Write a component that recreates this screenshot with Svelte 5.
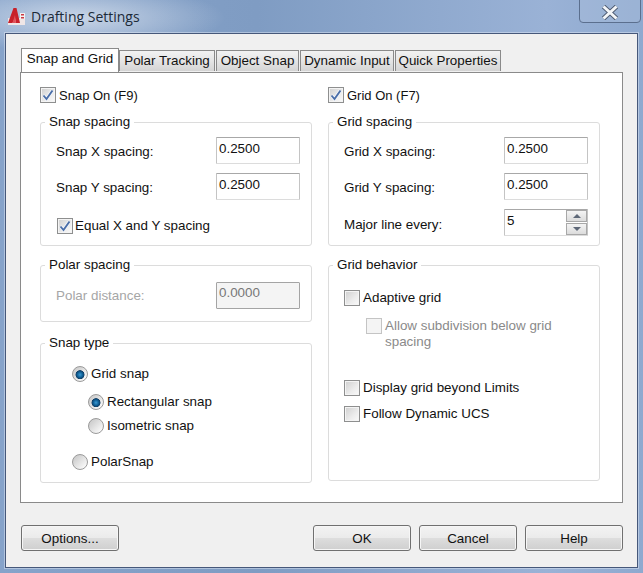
<script>
	const tabs = ['Snap and Grid', 'Polar Tracking', 'Object Snap', 'Dynamic Input', 'Quick Properties'];
</script>

{#snippet check(on, off = false)}
	<span class="box" class:off>
		{#if on}
			<svg width="14" height="14" viewBox="0 0 14 14">
				<path d="M2.5 7.5 L5.5 11 L11.5 2.5" fill="none" stroke="#f4f6fa" stroke-width="3.4" />
				<path d="M2.5 7.5 L5.5 11 L11.5 2.5" fill="none" stroke="#4a6ea8" stroke-width="1.9" />
			</svg>
		{/if}
	</span>
{/snippet}

{#snippet radio(on)}
	<span class="radio" class:on></span>
{/snippet}

<div class="window">
	<header class="titlebar">
		<svg class="app-icon" width="19" height="19" viewBox="0 0 19 19">
			<rect x="1" y="11" width="17" height="7" fill="#efe6e6" />
			<path d="M1 16 L6.5 1 L9.5 1 L13 16 L9 16 L8 11 L5.5 16 Z" fill="#c8202a" />
			<path d="M5.5 16 L8 8 L9 16 Z" fill="#e0525a" />
			<rect x="13" y="6" width="5" height="6" fill="#f2f2f2" />
			<rect x="14" y="7" width="3" height="1.5" fill="#cc3a44" />
			<rect x="14" y="10" width="3" height="1.5" fill="#cc3a44" />
		</svg>
		<span class="title">Drafting Settings</span>
		<button class="close" aria-label="Close">
			<svg width="18" height="15" viewBox="0 0 18 15"><path d="M2.5 1.5 L15.5 13.5 M15.5 1.5 L2.5 13.5" stroke="#4d5a70" stroke-width="4.8" /><path d="M2.5 1.5 L15.5 13.5 M15.5 1.5 L2.5 13.5" stroke="#f4f6f8" stroke-width="3" /></svg>
		</button>
	</header>

	<div class="client">
		<div class="tabs">
			{#each tabs as tab, i}
				<div class="tab" class:active={i === 0}>{tab}</div>
			{/each}
		</div>

		<div class="panel">
			<div class="col">
				<label class="row-check top">{@render check(true)}Snap On (F9)</label>
				<fieldset class="spacing">
					<legend>Snap spacing</legend>
					<div class="field"><span>Snap X spacing:</span><div class="input">0.2500</div></div>
					<div class="field"><span>Snap Y spacing:</span><div class="input">0.2500</div></div>
					<div class="field"><label class="row-check equal">{@render check(true)}Equal X and Y spacing</label></div>
				</fieldset>
				<fieldset class="polar">
					<legend>Polar spacing</legend>
					<div class="field"><span class="faint">Polar distance:</span><div class="input disabled">0.0000</div></div>
				</fieldset>
				<fieldset class="snap-type">
					<legend>Snap type</legend>
					<label class="row-radio">{@render radio(true)}Grid snap</label>
					<div class="nested">
						<label class="row-radio">{@render radio(true)}Rectangular snap</label>
						<label class="row-radio">{@render radio(false)}Isometric snap</label>
					</div>
					<label class="row-radio">{@render radio(false)}PolarSnap</label>
				</fieldset>
			</div>

			<div class="col">
				<label class="row-check top">{@render check(true)}Grid On (F7)</label>
				<fieldset class="spacing">
					<legend>Grid spacing</legend>
					<div class="field"><span>Grid X spacing:</span><div class="input">0.2500</div></div>
					<div class="field"><span>Grid Y spacing:</span><div class="input">0.2500</div></div>
					<div class="field major">
						<span>Major line every:</span>
						<div class="input spin">
							5
							<div class="spinner">
								<div class="spin-btn"><i class="up"></i></div>
								<div class="spin-btn"><i class="down"></i></div>
							</div>
						</div>
					</div>
				</fieldset>
				<fieldset class="behavior">
					<legend>Grid behavior</legend>
					<label class="row-check">{@render check(false)}Adaptive grid</label>
					<label class="row-check sub dim">{@render check(false, true)}<span>Allow subdivision below grid<br />spacing</span></label>
					<label class="row-check display">{@render check(false)}Display grid beyond Limits</label>
					<label class="row-check follow">{@render check(false)}Follow Dynamic UCS</label>
				</fieldset>
			</div>
		</div>

		<footer class="actions">
			<button>Options...</button>
			<div class="right">
				<button>OK</button>
				<button>Cancel</button>
				<button>Help</button>
			</div>
		</footer>
	</div>
</div>

<style>
	:global(body) {
		margin: 0;
	}

	.window {
		width: 643px;
		height: 573px;
		box-sizing: border-box;
		padding: 0 5px 5px;
		display: flex;
		flex-direction: column;
		overflow: hidden;
		background:
			radial-gradient(ellipse 150px 34px at 75px 18px, rgba(225, 232, 242, 0.75), rgba(225, 232, 242, 0) 100%),
			linear-gradient(90deg, #86a3ca 0%, #7f9cc3 40%, #9ab2d6 85%, #8ea9cf 100%);
		font-family: 'Liberation Sans', Arial, sans-serif;
		font-size: 13.4px;
		color: #111;
	}

	.titlebar {
		height: 33px;
		flex: none;
		display: flex;
		align-items: flex-start;
		position: relative;
	}

	.app-icon {
		margin: 7px 0 0 2px;
	}

	.title {
		margin: 7px 0 0 5px;
		font-family: 'Open Sans', sans-serif;
		font-size: 14px;
		color: #1c2a38;
	}

	.close {
		position: absolute;
		top: -1px;
		right: -3px;
		width: 62px;
		height: 24px;
		padding: 0;
		border: 1px solid #5b6f8e;
		border-radius: 0 0 4px 4px;
		background: rgba(170, 190, 220, 0.45);
	}

	.close svg {
		display: block;
		margin: 3px auto 0;
	}

	.client {
		flex: 1;
		box-sizing: border-box;
		border: 1px solid #46587a;
		background: #f0f0f0;
		padding: 14px 14px 0 14px;
		display: flex;
		flex-direction: column;
		box-shadow: 0 0 0 1px rgba(230, 238, 248, 0.45);
	}

	.tabs {
		display: flex;
		align-items: flex-end;
		height: 24px;
		padding-left: 1px;
		position: relative;
		z-index: 1;
	}

	.tab {
		box-sizing: border-box;
		height: 21px;
		margin-bottom: 1px;
		padding: 2px 0 0;
		margin-right: 1px;
		border: 1px solid #8a8a8a;
		border-bottom: 0;
		background: linear-gradient(#f2f2f2, #e6e6e6 45%, #d4d4d4);
		white-space: nowrap;
		text-align: center;
	}

	.tab:nth-child(2) {
		width: 96px;
		margin-left: 1px;
	}

	.tab:nth-child(3) {
		width: 83px;
	}

	.tab:nth-child(4) {
		width: 94px;
	}

	.tab:nth-child(5) {
		width: 106px;
	}

	.tab.active {
		width: 98px;
		height: 24px;
		margin: 0 -1px 0 0;
		padding: 2px 0 0;
		background: #fff;
	}

	.panel {
		box-sizing: border-box;
		width: 603px;
		height: 431px;
		border: 1px solid #8a8a8a;
		background: #fff;
		padding: 14px 21px 0 19px;
		display: grid;
		grid-template-columns: 272px 272px;
		column-gap: 16px;
		position: relative;
	}

	.col {
		display: flex;
		flex-direction: column;
	}

	fieldset {
		margin: 0;
		padding: 0;
		min-width: 0;
		border: 1px solid #dcdcdc;
		border-radius: 3px;
		box-sizing: border-box;
	}

	legend {
		padding: 0 4px;
		line-height: 16px;
	}

	.row-check,
	.row-radio {
		display: flex;
		align-items: flex-start;
		line-height: 16px;
	}

	.row-check.top {
		height: 16px;
		margin-bottom: 11px;
		font-size: 13px;
		line-height: 18px;
	}

	.box {
		box-sizing: border-box;
		flex: none;
		width: 16px;
		height: 16px;
		margin-right: 3px;
		border: 1px solid #8e8f8f;
		background: linear-gradient(135deg, #cfcfcf, #ececec 60%, #fafafa);
		box-shadow: inset 0 0 0 1px #f4f4f4;
		display: flex;
		align-items: center;
		justify-content: center;
	}

	.box.off {
		border-color: #c4c4c4;
		background: #f4f4f4;
	}

	.radio {
		box-sizing: border-box;
		flex: none;
		width: 16px;
		height: 16px;
		margin-right: 3px;
		border: 1px solid #9a9a9a;
		border-radius: 50%;
		background: linear-gradient(135deg, #c4c4c4, #f8f8f8 85%);
	}

	.radio.on {
		background:
			radial-gradient(circle at 50% 55%, #3a9ad4 0, #0c5a90 28%, #123f66 40%, rgba(18, 63, 102, 0) 46%),
			linear-gradient(135deg, #c4c4c4, #f8f8f8 85%);
	}

	.spacing {
		height: 132px;
		padding: 7px 11px 0 15px;
		margin-bottom: 11px;
	}

	.spacing legend,
	.polar legend,
	.behavior legend {
		margin-left: -11px;
	}

	.field {
		display: flex;
		justify-content: space-between;
		align-items: center;
		height: 27px;
		margin-bottom: 9px;
	}

	.field > span {
		padding-top: 2px;
	}

	.major > span {
		padding-top: 4px;
	}

	.polar .field > span {
		padding-top: 0;
	}

	.equal {
		margin: 6px 0 0 1px;
	}

	.equal .box {
		margin-right: 2px;
	}

	.input {
		box-sizing: border-box;
		width: 84px;
		height: 27px;
		padding: 3px 0 0 2px;
		border: 1px solid #c4c4c4;
		border-top-color: #a8a8a8;
		border-bottom-color: #dcdcdc;
		border-radius: 1px;
		background: #fff;
		position: relative;
	}

	.input.disabled {
		padding-top: 2px;
		background: #f4f4f4;
		border-color: #a4a4a4;
		color: #777;
	}

	.dim {
		color: #8a8a8a;
	}

	.faint {
		color: #a6a6a6;
	}

	.polar {
		height: 65px;
		padding: 9px 11px 0 15px;
		margin-bottom: 13px;
	}

	.snap-type {
		height: 148px;
		padding: 15px 0 0 31px;
	}

	.snap-type legend {
		margin-left: -27px;
	}

	.nested {
		display: flex;
		flex-direction: column;
		gap: 8px;
		margin: 12px 0 20px 16px;
	}

	.spinner {
		position: absolute;
		top: 0;
		right: 0;
		width: 21px;
		display: flex;
		flex-direction: column;
		gap: 1px;
	}

	.spin-btn {
		box-sizing: border-box;
		height: 12px;
		border: 1px solid #a8a8a8;
		background: linear-gradient(#f4f4f4, #dcdcdc);
		display: flex;
		align-items: center;
		justify-content: center;
	}

	.spin-btn i {
		width: 0;
		height: 0;
		border-left: 4px solid transparent;
		border-right: 4px solid transparent;
	}

	.up {
		border-bottom: 4px solid #5e6878;
	}

	.down {
		border-top: 4px solid #5e6878;
	}

	.behavior {
		height: 224px;
		padding: 17px 0 0 15px;
	}

	.sub {
		margin: 12px 0 0 22px;
	}

	.display {
		margin-top: 30px;
	}

	.follow {
		margin-top: 10px;
	}

	.actions {
		display: flex;
		justify-content: space-between;
		margin: 22px 0 0 1px;
		width: 602px;
	}

	.right {
		display: flex;
		gap: 8px;
	}

	button {
		font: inherit;
		color: inherit;
	}

	.actions button {
		box-sizing: border-box;
		width: 98px;
		height: 26px;
		padding: 0;
		border: 1px solid #707070;
		border-radius: 3px;
		background: linear-gradient(#f3f3f3, #ebebeb 48%, #dddddd 52%, #cfcfcf);
		box-shadow: inset 0 0 0 1px #f6f6f6;
	}
</style>
